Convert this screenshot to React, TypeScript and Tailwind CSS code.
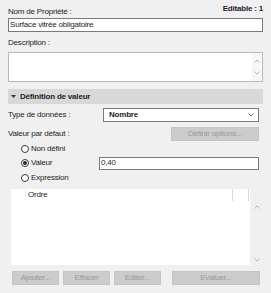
import React from 'react';

const Chevron = ({ up = false, color = '#b4b4b4' }: { up?: boolean; color?: string }) => (
  <svg width="6" height="4" viewBox="0 0 6 4" className="block">
    <polyline
      points={up ? '0.5,3.5 3,1 5.5,3.5' : '0.5,0.5 3,3 5.5,0.5'}
      fill="none"
      stroke={color}
      strokeWidth="1"
    />
  </svg>
);

const Radio = ({ checked = false }: { checked?: boolean }) => (
  <span className="w-[8px] h-[8px] rounded-full border border-[#3a3a3a] bg-white flex items-center justify-center shrink-0">
    {checked && <span className="w-[4px] h-[4px] rounded-full bg-[#2a2a2a]" />}
  </span>
);

const GrayButton = ({ label, width }: { label: string; width: string }) => (
  <div className={`${width} h-[14px] bg-[#cccccc] border border-[#c4c4c4] text-[#999999] flex items-center justify-center leading-none`}>
    {label}
  </div>
);

export default function App() {
  return (
    <div className="w-[271px] h-[293px] bg-[#f0f0f0] px-2 text-[8px] leading-[10px] tracking-[-0.2px] text-[#1e1e1e] font-['Liberation_Sans',Arial,sans-serif] overflow-hidden">
      {/* Name */}
      <div className="h-[18px] flex justify-between">
        <span className="mt-[7px]">Nom de Propriété :</span>
        <span className="mt-[4px] font-bold text-[#1c1c2c]">Editable : 1</span>
      </div>
      <div className="h-[14px] bg-white border border-[#7a7a7a] flex items-center pl-[1px]">
        Surface vitrée obligatoire
      </div>

      {/* Description */}
      <div className="mt-[6px]">Description :</div>
      <div className="mt-[4px] h-[30px] bg-white border border-[#b8b8b8] flex justify-end">
        <div className="w-[10px] bg-[#f7f7f7] flex flex-col items-center justify-between py-[6px]">
          <Chevron up />
          <Chevron />
        </div>
      </div>

      {/* Section header */}
      <div className="mt-[7px] h-[15px] bg-[#d8d8d8] flex items-center pl-[3px] gap-[4px] font-bold">
        <svg width="5" height="3" viewBox="0 0 5 3" className="block">
          <polygon points="0,0 5,0 2.5,3" fill="#333" />
        </svg>
        <span>Définition de valeur</span>
      </div>

      <div className="pr-[4px]">
        {/* Type */}
        <div className="mt-[4px] h-[14px] flex items-center justify-between">
          <span>Type de données :</span>
          <div className="w-[156px] h-[14px] bg-white border border-[#7a7a7a] flex items-center justify-between pl-[5px] pr-[4px] font-bold">
            <span>Nombre</span>
            <Chevron color="#666" />
          </div>
        </div>

        {/* Default value */}
        <div className="mt-[5px] h-[14px] flex items-center justify-between">
          <span>Valeur par défaut :</span>
          <GrayButton label="Définir options..." width="w-[88px]" />
        </div>

        <div className="mt-[1px] h-[14px] flex items-center pl-[13px] gap-[2px]">
          <Radio />
          <span>Non défini</span>
        </div>
        <div className="h-[14px] flex items-center justify-between">
          <div className="flex items-center pl-[13px] gap-[2px]">
            <Radio checked />
            <span>Valeur</span>
          </div>
          <div className="w-[160px] h-[13px] bg-white border border-[#7a7a7a] flex items-center pl-[1px]">
            0,40
          </div>
        </div>
        <div className="mt-[1px] h-[14px] flex items-center pl-[13px] gap-[2px]">
          <Radio />
          <span>Expression</span>
        </div>
      </div>

      {/* List */}
      <div className="mt-[4px] h-[76px] flex">
        <div className="ml-[3px] w-[239px] bg-white">
          <div className="h-[12px] flex">
            <div className="w-[15px] border-r border-[#ececec]" />
            <div className="w-[207px] border-r border-[#dadada] flex items-center pl-[2px]">Ordre</div>
            <div className="w-[16px] border-r border-[#dadada]" />
          </div>
        </div>
        <div className="flex-1 flex flex-col items-center justify-between pt-[16px] pb-[3px]">
          <Chevron up />
          <Chevron />
        </div>
      </div>

      {/* Buttons */}
      <div className="mt-[6px] flex pl-[4px]">
        <GrayButton label="Ajouter..." width="w-[47px]" />
        <div className="ml-[4px]">
          <GrayButton label="Effacer" width="w-[47px]" />
        </div>
        <div className="ml-[4px]">
          <GrayButton label="Editer..." width="w-[47px]" />
        </div>
        <div className="ml-[11px]">
          <GrayButton label="Evaluer..." width="w-[88px]" />
        </div>
      </div>
    </div>
  );
}
